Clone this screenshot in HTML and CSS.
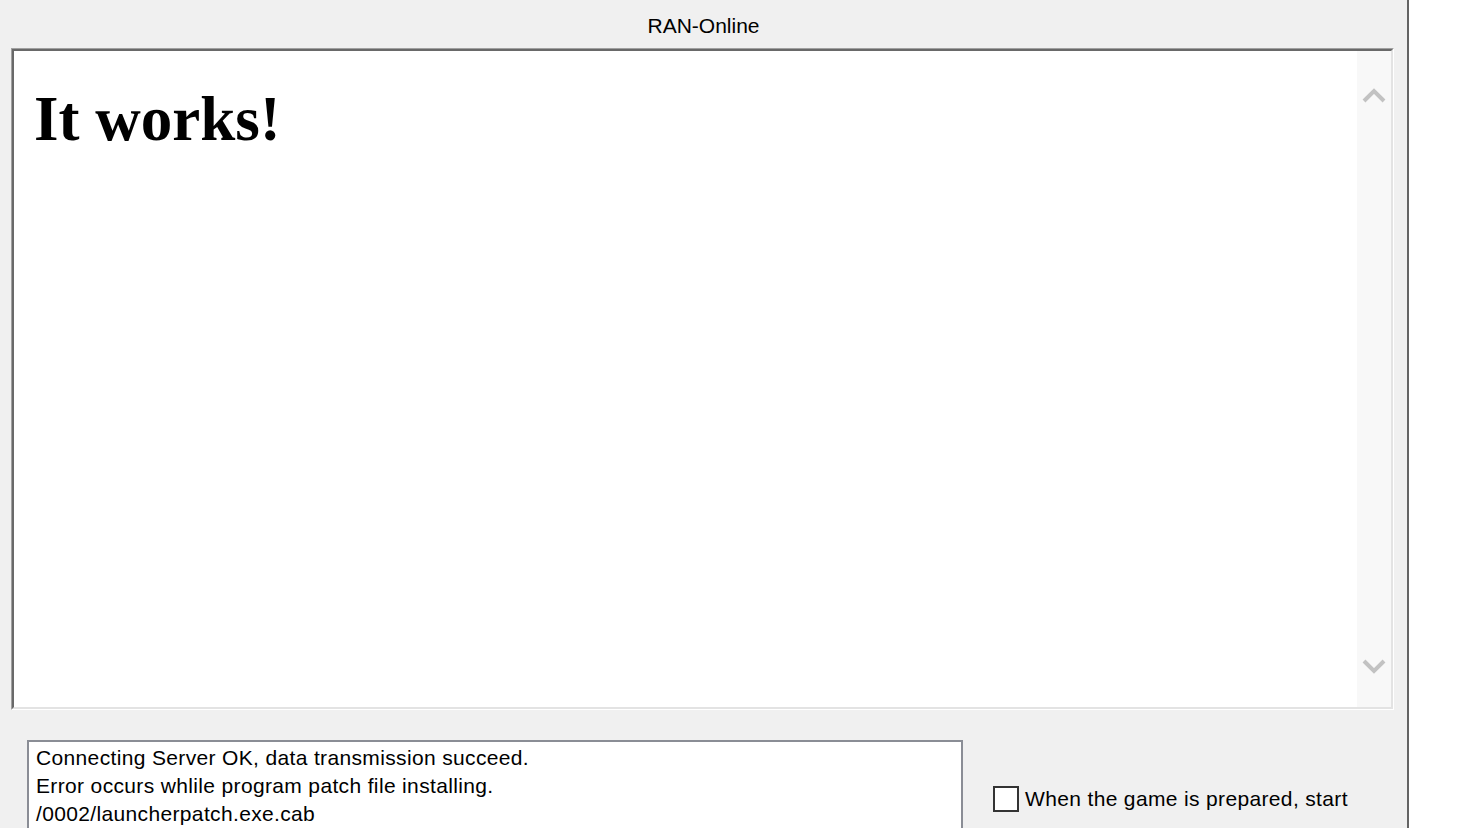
FILE: index.html
```html
<!DOCTYPE html>
<html>
<head>
<meta charset="utf-8">
<title>RAN-Online</title>
<link rel="stylesheet" href="styles.css">
</head>
<body>
<div class="screen">
  <div class="window">
    <div class="title">RAN-Online</div>
    <div class="frame-outer">
      <div class="frame-inner">
        <div class="page">
          <h1 class="works">It works!</h1>
        </div>
        <div class="scrollbar">
          <svg class="arrow" width="24" height="18" viewBox="0 0 24 18"><path d="M2 15 L12 5 L22 15" fill="none" stroke="#c2c2c2" stroke-width="4"/></svg>
          <svg class="arrow" width="24" height="18" viewBox="0 0 24 18"><path d="M2 3 L12 13 L22 3" fill="none" stroke="#c2c2c2" stroke-width="4"/></svg>
        </div>
      </div>
    </div>
    <div class="bottom">
      <div class="status">
        <div class="line">Connecting Server OK, data transmission succeed.</div>
        <div class="line">Error occurs whlile program patch file installing.</div>
        <div class="line">/0002/launcherpatch.exe.cab</div>
      </div>
      <label class="check">
        <span class="box"></span>
        <span class="check-text">When the game is prepared, start</span>
      </label>
    </div>
  </div>
  <div class="outside"></div>
</div>
</body>
</html>
```
FILE: styles.css
```css
html, body {
  margin: 0;
  padding: 0;
  height: 100%;
  overflow: hidden;
  background: #ffffff;
}
.screen {
  display: flex;
  height: 828px;
  overflow: hidden;
  font-family: "Liberation Sans", Arial, sans-serif;
  color: #000;
}
.window {
  width: 1407px;
  flex: none;
  background: #f0f0f0;
  border-right: 2px solid #646464;
  display: flex;
  flex-direction: column;
}
.window > * {
  flex: none;
}
.outside {
  flex: 1;
  background: #fff;
}
.title {
  height: 48px;
  display: flex;
  align-items: center;
  justify-content: center;
  font-size: 21px;
  padding-top: 4px;
  box-sizing: border-box;
}
.frame-outer {
  margin-left: 11px;
  width: 1383px;
  height: 662px;
  box-sizing: border-box;
  border: 1px solid;
  border-color: #a0a0a0 #ffffff #ffffff #a0a0a0;
}
.frame-inner {
  height: 100%;
  box-sizing: border-box;
  border: 2px solid;
  border-color: #696969 #e3e3e3 #e3e3e3 #696969;
  display: flex;
  background: #fff;
}
.page {
  flex: 1;
  padding: 32px 0 0 20px;
}
.works {
  margin: 0;
  font-family: "Liberation Serif", "Times New Roman", serif;
  font-weight: bold;
  font-size: 63px;
  line-height: 72px;
}
.scrollbar {
  width: 34px;
  flex: none;
  background: #f8f8f8;
  display: flex;
  flex-direction: column;
  justify-content: space-between;
  align-items: center;
  padding: 35px 0 31px;
}
.arrow {
  display: block;
}
.bottom {
  display: flex;
  align-items: flex-start;
  padding-top: 30px;
}
.status {
  margin-left: 27px;
  width: 936px;
  height: 120px;
  box-sizing: border-box;
  background: #fff;
  border: 2px solid #8a8d95;
  padding: 2px 0 0 7px;
  font-size: 21px;
  letter-spacing: 0.35px;
  line-height: 28px;
}
.check {
  display: flex;
  align-items: center;
  margin-left: 30px;
  margin-top: 46px;
  font-size: 21px;
  letter-spacing: 0.35px;
}
.box {
  width: 26px;
  height: 26px;
  box-sizing: border-box;
  border: 2px solid #333333;
  background: #fff;
  margin-right: 6px;
}
```
